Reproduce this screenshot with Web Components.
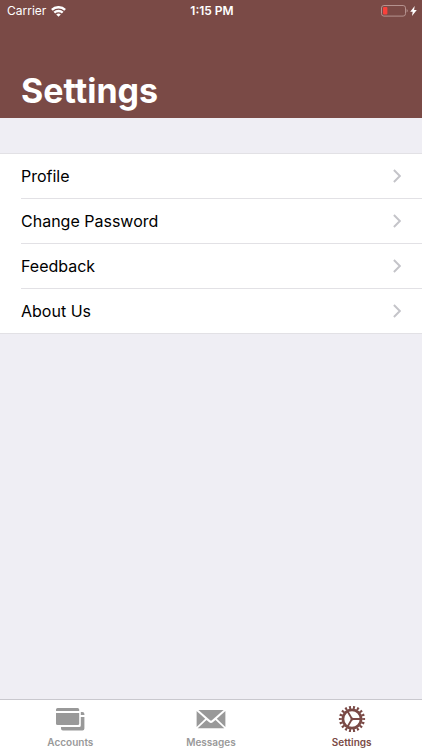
<!DOCTYPE html>
<html lang="en">
<head>
<meta charset="utf-8">
<meta name="viewport" content="width=device-width, initial-scale=1">
<title>Settings</title>
<style>
    html, body {
        height: 100%;
        margin: 0;
    }
    body {
        font-family: Inter, "Liberation Sans", sans-serif;
        background: #efeef4;
        --brand: #7a4a46;
        --line: #e2e1e5;
        --muted: #999;
    }
</style>
</head>
<body>
<settings-screen>
    <status-bar slot="top" carrier="Carrier" time="1:15 PM"></status-bar>
    <page-title slot="top">Settings</page-title>
    <settings-list>
        <settings-row>Profile</settings-row>
        <settings-row>Change Password</settings-row>
        <settings-row>Feedback</settings-row>
        <settings-row>About Us</settings-row>
    </settings-list>
    <tab-bar slot="bottom">
        <tab-item icon="cards" href="#accounts">Accounts</tab-item>
        <tab-item icon="mail" href="#messages">Messages</tab-item>
        <tab-item icon="gear" href="#settings" active>Settings</tab-item>
    </tab-bar>
</settings-screen>

<script>
    const icons = {
        cards: `
            <svg width="30" height="26" viewBox="0 0 30 26" fill="currentColor" aria-hidden="true">
                <path d="M2.6 2h20A1.6 1.6 0 0 1 24.2 3.6V5H1V3.6A1.6 1.6 0 0 1 2.6 2z"/>
                <path d="M1 7h23.2v10.4a1.6 1.6 0 0 1-1.6 1.6H2.600A1.6 1.6 0 0 1 1 17.400z"/>
                <path d="M25.800 6h1.600a2 2 0 0 1 2 2v1h-3.600z"/>
                <path d="M25.800 11h3.600v11.400a2 2 0 0 1-2 2H8a2 2 0 0 1-2-2V21h18.200a1.600 1.600 0 0 0 1.600-1.600z"/>
            </svg>`,
        mail: `
            <svg width="30" height="26" viewBox="0 0 30 26" fill="currentColor" aria-hidden="true">
                <path d="M2.4 4h25.200L15.900 14.300a1.400 1.400 0 0 1-1.800 0z"/>
                <path d="M.6 4.900 9.200 12.700.6 20.900z"/>
                <path d="M29.400 4.900 20.800 12.700l8.600 8.200z"/>
                <path d="M10.500 13.900l2.400 2.100a3.200 3.200 0 0 0 4.200 0l2.400-2.100 8.800 8.400H1.700z"/>
            </svg>`,
        gear: `
            <svg width="30" height="26" viewBox="0 0 30 26" fill="none" stroke="currentColor" aria-hidden="true">
                <circle cx="15" cy="13" r="11.6" stroke-width="3" pathLength="36" stroke-dasharray="1 1" stroke-dashoffset=".5"/>
                <circle cx="15" cy="13" r="9.1" stroke-width="2.8"/>
                <path d="M15 13h9M15 13l-4.5-7.8M15 13l-4.5 7.8" stroke-width="1.8"/>
                <circle cx="15" cy="13" r="1.5" fill="currentColor" stroke="none"/>
            </svg>`
    };

    class SettingsScreen extends HTMLElement {
        constructor() {
            super();
            this.attachShadow({mode: 'open'});
            this.shadowRoot.innerHTML = `
                <style>
                    :host {
                        display: flex;
                        flex-direction: column;
                        min-height: 100%;
                    }
                    header {
                        background: var(--brand);
                        color: #fff;
                    }
                    main {
                        flex: 1;
                        padding: 35px 0;
                    }
                </style>
                <header><slot name="top"></slot></header>
                <main><slot></slot></main>
                <slot name="bottom"></slot>
            `;
        }
    }

    class StatusBar extends HTMLElement {
        constructor() {
            super();
            this.attachShadow({mode: 'open'});

            const carrier = this.getAttribute('carrier') || '';
            const time = this.getAttribute('time') || '';

            this.shadowRoot.innerHTML = `
                <style>
                    :host {
                        display: grid;
                        grid-template-columns: 1fr auto 1fr;
                        align-items: center;
                        height: 22px;
                        padding: 0 5px 0 7px;
                        font-size: 12px;
                        line-height: 22px;
                    }
                    .left, .right {
                        display: flex;
                        align-items: center;
                        gap: 5px;
                    }
                    .right {
                        justify-content: flex-end;
                        gap: 2px;
                    }
                    .time {
                        font-weight: 600;
                    }
                </style>
                <div class="left">
                    <span>${carrier}</span>
                    <svg width="15" height="11" viewBox="0 0 15 11" fill="none" stroke="#fff" stroke-width="2.4" aria-hidden="true">
                        <path d="M.9 3.9a9.4 9.4 0 0 1 13.2 0"/>
                        <path d="M3.3 6.7a6 6 0 0 1 8.4 0"/>
                        <path d="M7.5 10.8 5.2 8.5a3.3 3.3 0 0 1 4.6 0z" fill="#fff" stroke="none"/>
                    </svg>
                </div>
                <span class="time">${time}</span>
                <div class="right">
                    <svg width="27" height="12" viewBox="0 0 27 12" fill="none" aria-hidden="true">
                        <rect x=".5" y=".5" width="24" height="10.6" rx="2.4" stroke="#b5928f"/>
                        <rect x="2" y="2" width="4.4" height="7.6" rx="1" fill="#f8413b"/>
                        <path d="M25.6 4a2 2 0 0 1 0 3.6z" fill="#b5928f"/>
                    </svg>
                    <svg width="7" height="10" viewBox="0 0 7 10" fill="#fff" aria-hidden="true">
                        <path d="M4.7 0 .2 5.8h2.5L2 10l4.800-6H4.100z"/>
                    </svg>
                </div>
            `;
        }
    }

    class PageTitle extends HTMLElement {
        constructor() {
            super();
            this.attachShadow({mode: 'open'});
            this.shadowRoot.innerHTML = `
                <style>
                    :host {
                        display: block;
                        padding: 48px 21px 6px;
                    }
                    h1 {
                        margin: 0;
                        font-size: 34px;
                        line-height: 42px;
                        font-weight: 700;
                    }
                </style>
                <h1><slot></slot></h1>
            `;
        }
    }

    class SettingsList extends HTMLElement {
        constructor() {
            super();
            this.attachShadow({mode: 'open'});
            this.shadowRoot.innerHTML = `
                <style>
                    :host {
                        display: block;
                        background: #fff;
                        border-top: 1px solid var(--line);
                    }
                    ::slotted(:last-child) {
                        --indent: 0;
                    }
                </style>
                <slot></slot>
            `;
        }
    }

    class SettingsRow extends HTMLElement {
        constructor() {
            super();
            this.attachShadow({mode: 'open'});
            this.shadowRoot.innerHTML = `
                <style>
                    :host {
                        display: block;
                    }
                    button {
                        display: flex;
                        align-items: center;
                        justify-content: space-between;
                        width: 100%;
                        height: 44px;
                        padding: 0 21px;
                        border: 0;
                        background: none;
                        color: #000;
                        font: inherit;
                        font-size: 16px;
                        line-height: 22px;
                        text-align: left;
                    }
                    .line {
                        height: 1px;
                        margin-left: var(--indent, 21px);
                        background: var(--line);
                    }
                </style>
                <button type="button">
                    <span><slot></slot></span>
                    <svg width="8" height="14" viewBox="0 0 8 14" fill="none" stroke="#c4c4c9" stroke-width="2" aria-hidden="true">
                        <path d="M.9 1 6.9 7l-6 6"/>
                    </svg>
                </button>
                <div class="line"></div>
            `;
        }
    }

    class TabBar extends HTMLElement {
        constructor() {
            super();
            this.attachShadow({mode: 'open'});
            this.shadowRoot.innerHTML = `
                <style>
                    :host {
                        display: block;
                        background: #fff;
                        border-top: 1px solid #c9c8ce;
                    }
                    nav {
                        display: flex;
                    }
                    ::slotted(*) {
                        flex: 1;
                    }
                </style>
                <nav><slot></slot></nav>
            `;
        }
    }

    class TabItem extends HTMLElement {
        constructor() {
            super();
            this.attachShadow({mode: 'open'});

            const icon = icons[this.getAttribute('icon')] || '';
            const href = this.getAttribute('href') || '#';

            this.shadowRoot.innerHTML = `
                <style>
                    :host {
                        display: block;
                        color: var(--muted);
                    }
                    :host([active]) {
                        color: var(--brand);
                    }
                    a {
                        display: flex;
                        flex-direction: column;
                        align-items: center;
                        gap: 4px;
                        padding: 6px 0 1px;
                        color: inherit;
                        font-size: 10px;
                        line-height: 13px;
                        font-weight: 600;
                        text-decoration: none;
                    }
                    svg {
                        display: block;
                    }
                </style>
                <a href="${href}">${icon}<span><slot></slot></span></a>
            `;
        }
    }

    customElements.define('settings-screen', SettingsScreen);
    customElements.define('status-bar', StatusBar);
    customElements.define('page-title', PageTitle);
    customElements.define('settings-list', SettingsList);
    customElements.define('settings-row', SettingsRow);
    customElements.define('tab-bar', TabBar);
    customElements.define('tab-item', TabItem);
</script>
</body>
</html>
